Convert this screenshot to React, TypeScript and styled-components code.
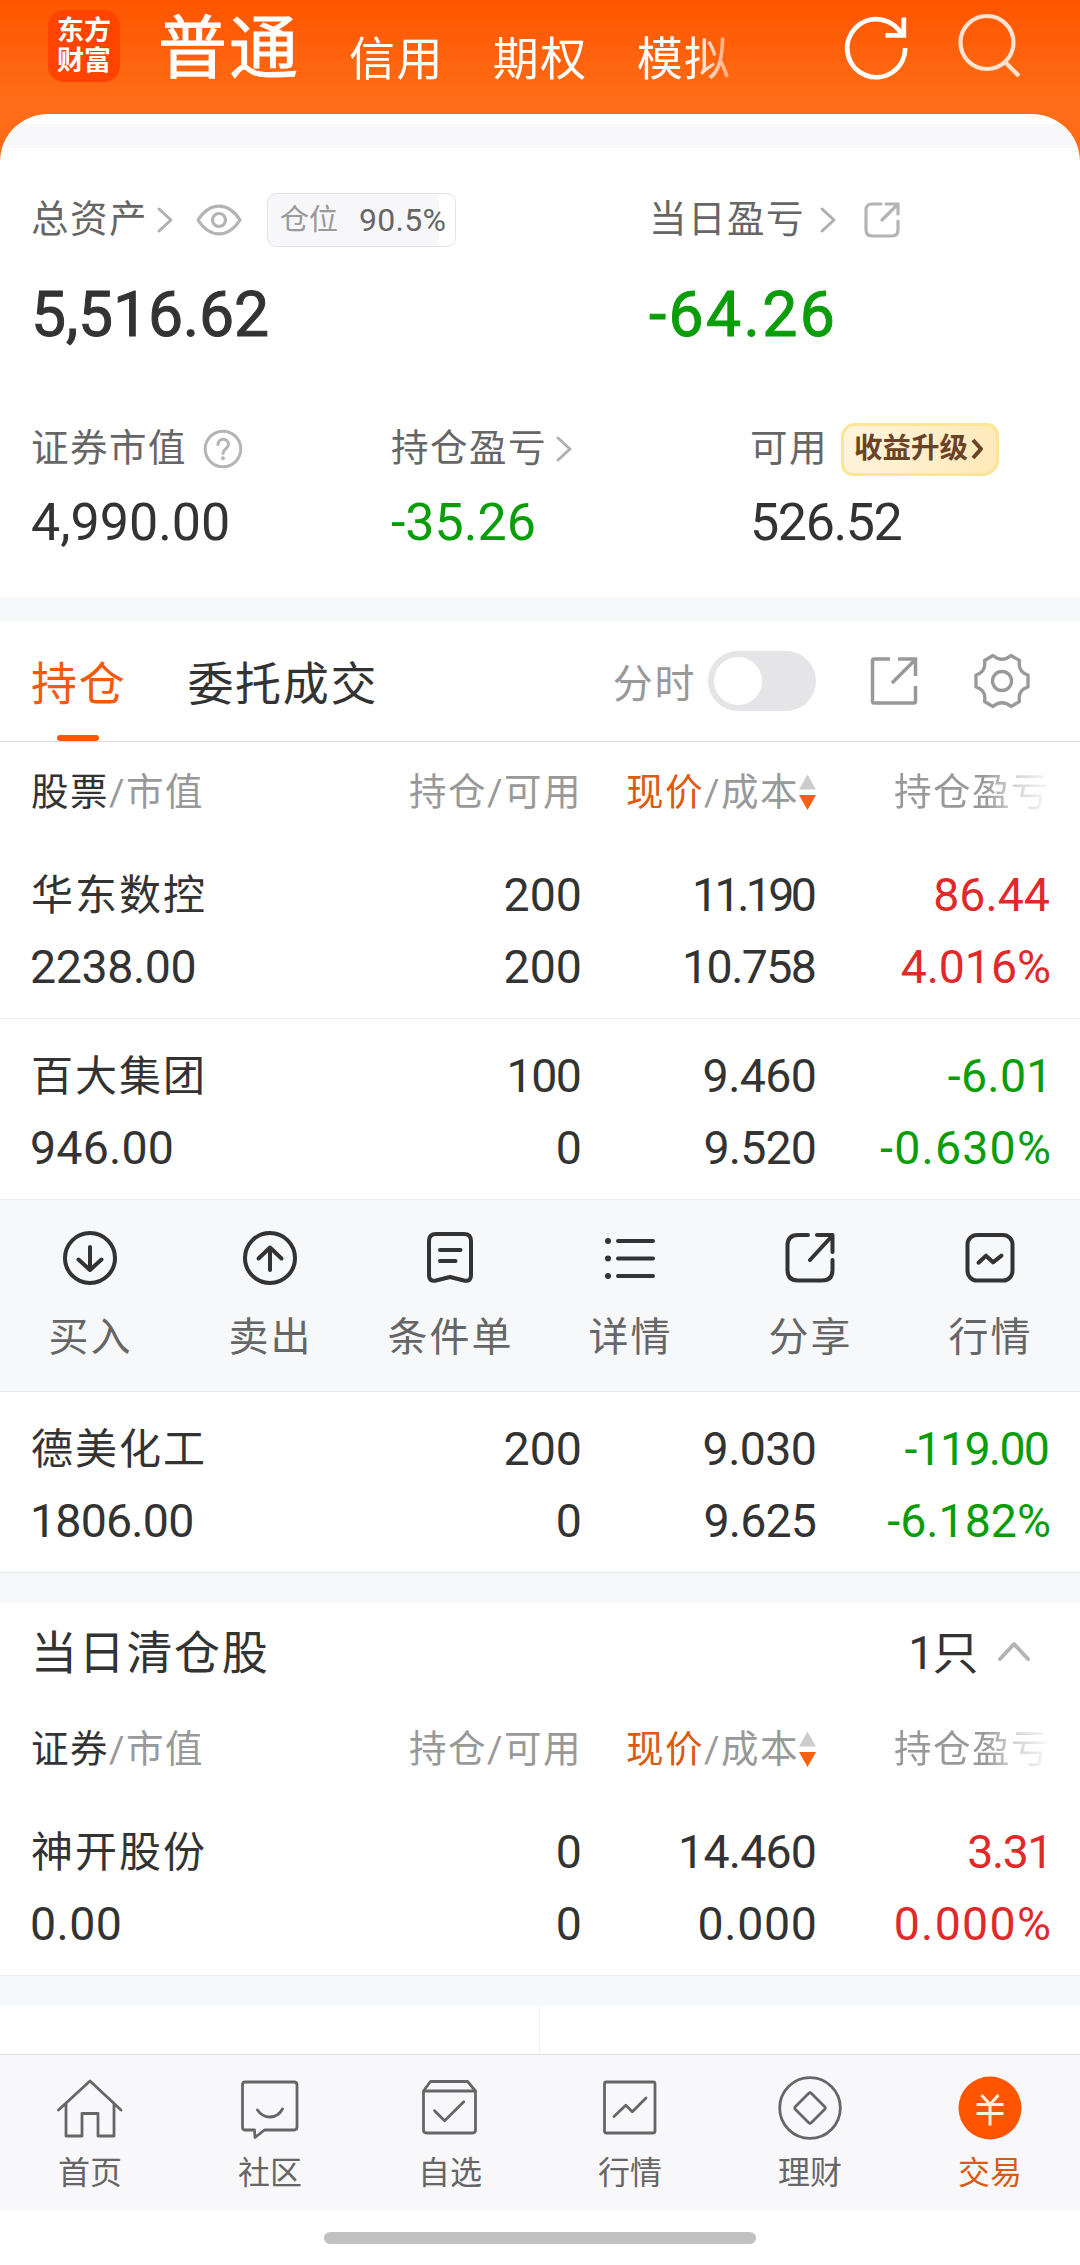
import React from "react";
import styled, { createGlobalStyle } from "styled-components";

const INK = "#333333";
const MUTED = "#666666";
const FAINT = "#999999";
const ORANGE = "#f25a0c";
const GREEN = "#0a9d0a";
const RED = "#e02a2a";
const BAND = "#f7f8fa";

const Global = createGlobalStyle`
  * { box-sizing: border-box; }
  body {
    margin: 0;
    background: #fff;
    color: ${INK};
    font-family: Roboto, "Noto Sans CJK SC", sans-serif;
  }
  svg { display: block; flex: none; overflow: visible; }
`;

const Screen = styled.div`
  width: 1080px;
  height: 2265px;
  display: flex;
  flex-direction: column;
  overflow: hidden;
  background: #fff;
`;

const Top = styled.div`
  height: 166px;
  background: linear-gradient(#ff5500 0, #ff6a14 90px, #ff6c18 114px, #ff6a14 166px);
`;

const TopBar = styled.header`
  height: 114px;
  display: flex;
  align-items: flex-start;
  padding: 0 60px 0 48px;
`;

const Logo = styled.div`
  width: 72px;
  height: 72px;
  margin-top: 10px;
  padding-top: 6px;
  border-radius: 16px;
  background: #ff4300;
  color: #fff;
  font-size: 27px;
  font-weight: 700;
  line-height: 30px;
  text-align: center;
`;

const Accounts = styled.nav`
  display: flex;
  width: 592px;
  margin-left: 38px;
  color: #fff;
  -webkit-mask-image: linear-gradient(90deg, #000 536px, rgba(0, 0, 0, 0.35) 578px);
  mask-image: linear-gradient(90deg, #000 536px, rgba(0, 0, 0, 0.35) 578px);
`;

const AccountTab = styled.span<{ $active?: boolean }>`
  font-size: ${(p) => (p.$active ? 69 : 46)}px;
  font-weight: 400;
  -webkit-text-stroke: ${(p) => (p.$active ? 0.9 : 0)}px currentColor;
  letter-spacing: ${(p) => (p.$active ? 2 : 1.4)}px;
  line-height: 100px;
  height: 114px;
  padding-top: ${(p) => (p.$active ? 0 : 9)}px;
  margin-right: 49px;
  white-space: nowrap;
`;

const TopIcons = styled.div`
  display: flex;
  gap: 48px;
  margin: 12px 0 0 auto;
`;

const Sheet = styled.div`
  height: 52px;
  padding-top: 10px;
  border-radius: 48px 48px 0 0;
  background: #fff;
  overflow: hidden;
`;

const SheetBand = styled.div`
  height: 24px;
  background: #f8f8fa;
`;

const Assets = styled.section`
  height: 431px;
  padding: 20px 30px 0 31px;
`;

const AssetRow = styled.div<{ $cols: string }>`
  display: grid;
  grid-template-columns: ${(p) => p.$cols};
`;

const Label = styled.div`
  display: flex;
  align-items: center;
  height: 68px;
  color: ${MUTED};
  font-size: 37.5px;
  letter-spacing: 1.5px;
  line-height: 1;
  white-space: nowrap;
`;

const Total = styled.div<{ $color?: string; $track: number }>`
  height: 161px;
  line-height: 121px;
  font-size: 62.5px;
  font-weight: 400;
  letter-spacing: ${(p) => p.$track}px;
  color: ${(p) => p.$color || INK};
  -webkit-text-stroke: 1px currentColor;
`;

const Amount = styled.div<{ $color?: string; $track?: number }>`
  line-height: 80px;
  font-size: 52px;
  letter-spacing: ${(p) => p.$track || 0}px;
  color: ${(p) => p.$color || INK};
`;

const Position = styled.div`
  width: 189px;
  height: 54px;
  display: flex;
  align-items: center;
  margin-left: 25px;
  padding-left: 12px;
  gap: 21px;
  border: 1px solid #e3e3e6;
  border-radius: 9px;
  background: linear-gradient(90deg, #f7f7fa 91.5%, #fff 91.5%);
  font-size: 32px;
  letter-spacing: 0.3px;
`;

const PositionName = styled.span`
  color: ${FAINT};
  font-size: 29px;
  letter-spacing: 0;
`;

const Upgrade = styled.div`
  width: 158px;
  height: 53px;
  display: flex;
  align-items: center;
  gap: 3px;
  margin-left: 13px;
  padding-left: 10px;
  border: 3px solid #fbe596;
  border-radius: 14px 12px 16px 12px;
  background: linear-gradient(100deg, #fff4dd, #ffe9b8);
  color: #6a4328;
  font-size: 28.5px;
  font-weight: 700;
  letter-spacing: 0;
`;

const Band = styled.div<{ $h: number }>`
  height: ${(p) => p.$h}px;
  flex: none;
  background: ${BAND};
`;

const TabBar = styled.nav`
  height: 121px;
  flex: none;
  display: flex;
  border-bottom: 1px solid #dcdcde;
  padding: 0 50px 0 31px;
`;

const Tab = styled.div<{ $active?: boolean }>`
  display: flex;
  flex-direction: column;
  align-items: center;
  height: 120px;
  margin-right: 61px;
  color: ${(p) => (p.$active ? ORANGE : INK)};
  font-size: 46px;
  letter-spacing: 1.7px;
  line-height: 126px;
  &::after {
    content: "";
    width: 42px;
    height: 6px;
    margin: -12px 2px 0 0;
    border-radius: 3px;
    background: ${(p) => (p.$active ? "#ff5500" : "transparent")};
  }
`;

const Tools = styled.div`
  display: flex;
  align-items: center;
  margin-left: auto;
  color: ${FAINT};
  font-size: 40px;
  letter-spacing: 1.6px;
  gap: 56px;
`;

const Intraday = styled.div`
  display: flex;
  align-items: center;
  gap: 12px;
  margin-right: -2px;
`;

const Toggle = styled.div`
  width: 108px;
  height: 60px;
  padding: 6px;
  border-radius: 30px;
  background: #e5e5e8;
  &::before {
    content: "";
    display: block;
    width: 48px;
    height: 48px;
    border-radius: 50%;
    background: #fff;
  }
`;

const Columns = styled.div`
  display: grid;
  grid-template-columns: 351px 200px 235px 233px;
  padding: 0 30px 0 31px;
  flex: none;
`;

const HeadRow = styled(Columns)`
  height: 96px;
  padding-top: 4px;
  color: ${FAINT};
  font-size: 37.5px;
  letter-spacing: 1.5px;
  line-height: 96px;
`;

const HeadCell = styled.div<{ $left?: boolean }>`
  display: flex;
  align-items: center;
  justify-content: ${(p) => (p.$left ? "flex-start" : "flex-end")};
  height: 92px;
  white-space: nowrap;
`;

const Fading = styled(HeadCell)`
  -webkit-mask-image: linear-gradient(90deg, #000 168px, rgba(0, 0, 0, 0.45) 196px, rgba(0, 0, 0, 0.1) 228px);
  mask-image: linear-gradient(90deg, #000 168px, rgba(0, 0, 0, 0.45) 196px, rgba(0, 0, 0, 0.1) 228px);
`;

const Strong = styled.span<{ $color?: string }>`
  color: ${(p) => p.$color || INK};
`;

const HoldingRow = styled(Columns)`
  height: 181px;
  padding-top: 21px;
  border-bottom: 1px solid #ebecee;
  grid-auto-rows: 72px;
`;

const Name = styled.div`
  font-size: 42px;
  letter-spacing: 2px;
  line-height: 73px;
`;

/* The tracking that follows the last digit is cancelled, so that the columns end flush. */
const Figure = styled.div<{ $color?: string; $track: number; $pull: number; $left?: boolean }>`
  font-size: 46.5px;
  line-height: 72px;
  white-space: nowrap;
  text-align: ${(p) => (p.$left ? "left" : "right")};
  color: ${(p) => p.$color || INK};
  letter-spacing: ${(p) => p.$track}px;
  margin-right: ${(p) => -p.$track - p.$pull}px;
  margin-left: ${(p) => (p.$left ? -1 : 0)}px;
`;

const Actions = styled.div`
  height: 192px;
  flex: none;
  display: grid;
  grid-template-columns: repeat(6, 180px);
  background: ${BAND};
  border-bottom: 1px solid #e8e9eb;
`;

const Action = styled.div`
  display: flex;
  flex-direction: column;
  align-items: center;
  padding-top: 28px;
  color: ${MUTED};
  font-size: 40px;
  letter-spacing: 2px;
  line-height: 60px;
  text-indent: 1px;
  svg { margin-bottom: 20px; }
`;

const SectionHead = styled.div`
  height: 96px;
  flex: none;
  display: flex;
  align-items: center;
  padding: 4px 49px 0 31px;
  font-size: 46px;
  letter-spacing: 1.7px;
  line-height: 1;
`;

const Count = styled.span`
  display: flex;
  align-items: center;
  gap: 20px;
  margin-left: auto;
  letter-spacing: -1.5px;
  svg { margin-top: -4px; }
`;

const Split = styled.div`
  height: 48px;
  flex: none;
  display: grid;
  grid-template-columns: 540px 540px;
  > :first-child { border-right: 1px solid #eeeeee; }
`;

const BottomNav = styled.nav`
  height: 156px;
  flex: none;
  display: grid;
  grid-template-columns: repeat(6, 180px);
  border-top: 1px solid #dfdfe1;
  background: #f8f8fa;
`;

const NavItem = styled.div<{ $active?: boolean }>`
  display: flex;
  flex-direction: column;
  align-items: center;
  padding-top: 21px;
  color: ${(p) => (p.$active ? "#dd5a12" : MUTED)};
  font-size: 32px;
  line-height: 44px;
  svg { margin-bottom: 11px; }
`;

const HomeArea = styled.div`
  height: 55px;
  display: flex;
  justify-content: center;
  padding-top: 22px;
  &::before {
    content: "";
    width: 432px;
    height: 12px;
    border-radius: 6px;
    background: #c1c1c1;
  }
`;

type IconProps = {
  w: number;
  h?: number;
  stroke?: string;
  sw?: number;
  ml?: number;
  cap?: "round" | "butt";
  children: React.ReactNode;
};

/* Every icon is drawn around its own centre point. */
const Icon = ({ w, h = w, stroke = INK, sw = 4, ml = 0, cap = "round", children }: IconProps) => (
  <svg
    width={w}
    height={h}
    viewBox={`${-w / 2} ${-h / 2} ${w} ${h}`}
    fill="none"
    stroke={stroke}
    strokeWidth={sw}
    strokeLinecap={cap}
    strokeLinejoin="round"
    style={ml ? { marginLeft: ml } : undefined}
  >
    {children}
  </svg>
);

const Chevron = ({ ml }: { ml: number }) => (
  <Icon w={16} h={26} stroke="#b0b0b0" sw={3} ml={ml}>
    <path d="M-6-11 6 0-6 11" />
  </Icon>
);

const SortSvg = styled.svg`
  margin-right: 1px;
`;

const SortArrows = () => (
  <SortSvg width={17} height={36} viewBox="0 0 17 36">
    <path d="M8.5 .5 17 15.500H0Z" fill="#cccccc" />
    <path d="M8.5 36 17 21H0Z" fill="#f6600f" />
  </SortSvg>
);

/* A printed number, the tracking of its digits, and how far it hangs to the right. */
type Num = [text: string, track: number, pull?: number];

type Holding = {
  name: string;
  value: Num;
  qty: [Num, Num];
  price: [Num, Num];
  profit: [Num, Num];
  color: string;
};

const holdings: Holding[] = [
  {
    name: "华东数控",
    value: ["2238.00", -0.4],
    qty: [["200", 0], ["200", 0]],
    price: [["11.190", -3.6], ["10.758", -1.6]],
    profit: [["86.44", 0], ["4.016%", -0.1, 1]],
    color: RED,
  },
  {
    name: "百大集团",
    value: ["946.00", 0.2],
    qty: [["100", -1.5], ["0", 0]],
    price: [["9.460", -0.6], ["9.520", -0.8]],
    profit: [["-6.01", 0.3, 2.5], ["-0.630%", 1.2, 1]],
    color: GREEN,
  },
  {
    name: "德美化工",
    value: ["1806.00", -0.8],
    qty: [["200", 0], ["0", 0]],
    price: [["9.030", -0.6], ["9.625", -0.8]],
    profit: [["-119.00", -1.7], ["-6.182%", 0, 1]],
    color: GREEN,
  },
];

const cleared: Holding = {
  name: "神开股份",
  value: ["0.00", 0.4],
  qty: [["0", 0], ["0", 0]],
  price: [["14.460", -0.8], ["0.000", 0.7]],
  profit: [["3.31", -1.5, 3.5], ["0.000%", 1.3, 1]],
  color: RED,
};

const Cell = ({ n, color, left }: { n: Num; color?: string; left?: boolean }) => (
  <Figure $track={Math.max(n[1], -9)} $pull={n[2] || 0} $color={color} $left={left}>{n[0]}</Figure>
);

const Row = ({ h }: { h: Holding }) => (
  <HoldingRow>
    <Name>{h.name}</Name>
    <Cell n={h.qty[0]} />
    <Cell n={h.price[0]} />
    <Cell n={h.profit[0]} color={h.color} />
    <Cell n={h.value} left />
    <Cell n={h.qty[1]} />
    <Cell n={h.price[1]} />
    <Cell n={h.profit[1]} color={h.color} />
  </HoldingRow>
);

const TableHead = ({ first }: { first: string }) => (
  <HeadRow>
    <HeadCell $left><Strong>{first}</Strong>/市值</HeadCell>
    <HeadCell>持仓/可用</HeadCell>
    <HeadCell><Strong $color="#dd5a12">现价</Strong>/成本<SortArrows /></HeadCell>
    <Fading>持仓盈亏</Fading>
  </HeadRow>
);

const actions = [
  { label: "买入", art: <><circle r="25" /><path d="M0-11V12M-11.5 1.5 0 12 11.5 1.5" /></> },
  { label: "卖出", art: <><circle r="25" /><path d="M0 12V-10.5M-11.5 .5 0-10.5 11.5 .5" /></> },
  { label: "条件单", art: <path d="M-14-24H14Q21-24 21-17V17Q21 24 14 22.500L0 19-14 22.500Q-21 24-21 17V-17Q-21-24-14-24ZM-10-8H10.500M-10 3H5.500" /> },
  { label: "详情", art: <><path d="M-12-17H23M-12 .5H23M-12 18H23" /><g fill={INK} stroke="none"><circle cx="-22" cy="-17" r="3" /><circle cx="-22" cy=".5" r="3" /><circle cx="-22" cy="18" r="3" /></g></> },
  { label: "分享", art: <path d="M-2-23H-12Q-22.500-23-22.500-12.500V12Q-22.500 22.500-12 22.500H12Q22.500 22.500 22.500 12V2M7-23H22.500V-6M22-22 0 2" /> },
  { label: "行情", art: <><rect x="-22.500" y="-23" width="45" height="45.500" rx="9.500" /><path d="M-11.500 4.700-4-2.300 3 4.300 11.500-2.300" /></> },
];

const navItems = [
  { label: "首页", art: <path d="M-31.500 2 0-27 31 2M-24-4V28H-8V5.500H8V28H24V-4" /> },
  { label: "社区", art: <path d="M-25-26H24Q27-26 27-23V19Q27 22 24 22H-5.500L-15 29.500-15.500 22H-25Q-27.500 22-27.500 19V-23Q-27.500-26-25-26ZM-12.500 2Q-8 9 0 9T12.500 1" /> },
  { label: "自选", art: <path d="M-26.500-17 -19.500-26.500H17.600L25.500-17V22Q25.500 25 22.500 25H-23.500Q-26.500 25-26.500 22ZM-26.500-17H25.500M-15.400 2.700-5.400 12.700 13.800-6.300" /> },
  { label: "行情", art: <><rect x="-25.500" y="-26" width="50.500" height="51" rx="2" /><path d="M-16 8.500-4.200-2.700 2.300 3.700 16-10" /></> },
  { label: "理财", art: <><circle r="30.300" /><path d="M-1.500-14.500Q0-16 1.500-14.500L14.500-1.500Q16 0 14.500 1.500L1.500 14.500Q0 16-1.500 14.500L-14.500 1.500Q-16 0-14.500-1.500Z" /></> },
];

export default function App() {
  return (
    <Screen>
      <Global />
      <Top>
        <TopBar>
          <Logo>东方<br />财富</Logo>
          <Accounts>
            <AccountTab $active>普通</AccountTab>
            <AccountTab>信用</AccountTab>
            <AccountTab>期权</AccountTab>
            <AccountTab>模拟</AccountTab>
          </Accounts>
          <TopIcons>
            <Icon w={64} h={69} stroke="#ffffff" sw={4.800} cap="butt">
              <path d="M29.200 1.500A29 29 0 1 1 26.500-10.500" />
              <path strokeLinejoin="miter" d="M27.800-29V-11.200H9.500" />
            </Icon>
            <Icon w={64} h={70} stroke="#ffe3d3" sw={4.200} cap="butt">
              <circle cx="-1" cy="-4.500" r="26.500" />
              <path d="M16.500 14.500 31 29" />
            </Icon>
          </TopIcons>
        </TopBar>
        <Sheet><SheetBand /></Sheet>
      </Top>

      <Assets>
        <AssetRow $cols="618px 1fr">
          <Label>
            总资产<Chevron ml={9} />
            <Icon w={46} h={34} stroke="#b4b4b4" sw={3.200} ml={23}>
              <path d="M-21 0C-9-18.500 9-18.500 21 0 9 18.500-9 18.500-21 0Z" />
              <circle r="6.500" />
            </Icon>
            <Position><PositionName>仓位</PositionName>90.5%</Position>
          </Label>
          <Label>
            当日盈亏<Chevron ml={15} />
            <Icon w={36} stroke="#b4b4b4" sw={3.200} ml={28}>
              <path d="M-1-16H-10Q-16-16-16-10V10Q-16 16-10 16H10Q16 16 16 10V1M4-16H16V-6M16-16 0 0" />
            </Icon>
          </Label>
          <Total $track={-0.2}>5,516.62</Total>
          <Total $track={2.3} $color={GREEN}>-64.26</Total>
        </AssetRow>
        <AssetRow $cols="360px 359px 1fr">
          <Label>
            证券市值
            <Icon w={40} stroke="#b4b4b4" sw={3} ml={16}>
              <circle r="17.800" />
              <path d="M-5-4.500C-5-11.500 5.500-11.500 5.500-4.500 5.500-.5 0 0 0 4.500" />
              <circle cy="9.300" r="2" fill="#b4b4b4" stroke="none" />
            </Icon>
          </Label>
          <Label>持仓盈亏<Chevron ml={9} /></Label>
          <Label>
            可用
            <Upgrade>
              收益升级
              <Icon w={12} h={20} stroke="#6a4328" sw={4} cap="butt"><path d="M-4-9 4 0-4 9" /></Icon>
            </Upgrade>
          </Label>
          <Amount>4,990.00</Amount>
          <Amount $color={GREEN}>-35.26</Amount>
          <Amount $track={-1.4}>526.52</Amount>
        </AssetRow>
      </Assets>

      <Band $h={24} />
      <TabBar>
        <Tab $active>持仓</Tab>
        <Tab>委托成交</Tab>
        <Tools>
          <Intraday>分时<Toggle /></Intraday>
          <Icon w={48} stroke={FAINT} sw={3.500} cap="butt">
            <path strokeLinejoin="miter" d="M-4-22H-20Q-21.500-22-21.500-20V20Q-21.500 22-20 22H20Q21.500 22 21.500 20V5M4-22H21.500V-5M21-21-2 2" />
          </Icon>
          <Icon w={56} stroke={FAINT} sw={3.300}>
            <circle r="9.500" />
            <path d="M-9-25.500Q0-18 9-25.500L17.500-20.500Q15.500-9 26-6V6Q15.500 9 17.500 20.500L9 25.500Q0 18-9 25.500L-17.500 20.500Q-15.500 9-26 6V-6Q-15.500-9-17.500-20.500Z" />
          </Icon>
        </Tools>
      </TabBar>

      <TableHead first="股票" />
      <Row h={holdings[0]} />
      <Row h={holdings[1]} />
      <Actions>
        {actions.map((a) => (
          <Action key={a.label}>
            <Icon w={60}>{a.art}</Icon>
            {a.label}
          </Action>
        ))}
      </Actions>
      <Row h={holdings[2]} />

      <Band $h={30} />
      <SectionHead>
        当日清仓股
        <Count>
          1只
          <Icon w={34} h={20} stroke="#b4b4b4" sw={4}><path d="M-14 8 0-7 14 8" /></Icon>
        </Count>
      </SectionHead>
      <TableHead first="证券" />
      <Row h={cleared} />
      <Band $h={30} />
      <Split><div /><div /></Split>

      <BottomNav>
        {navItems.map((n) => (
          <NavItem key={n.label}>
            <Icon w={64} stroke={MUTED} sw={2.800}>{n.art}</Icon>
            {n.label}
          </NavItem>
        ))}
        <NavItem $active>
          <Icon w={64} stroke="#fff0e4" sw={3} cap="butt">
            <circle r="31.500" fill="#ff5500" stroke="none" />
            <path d="M-8.500-13 0-3.500 8.500-13M0-3.500V17.500M-13.500-3.500H13.500M-13.500 5.500H13.500" />
          </Icon>
          交易
        </NavItem>
      </BottomNav>
      <HomeArea />
    </Screen>
  );
}
